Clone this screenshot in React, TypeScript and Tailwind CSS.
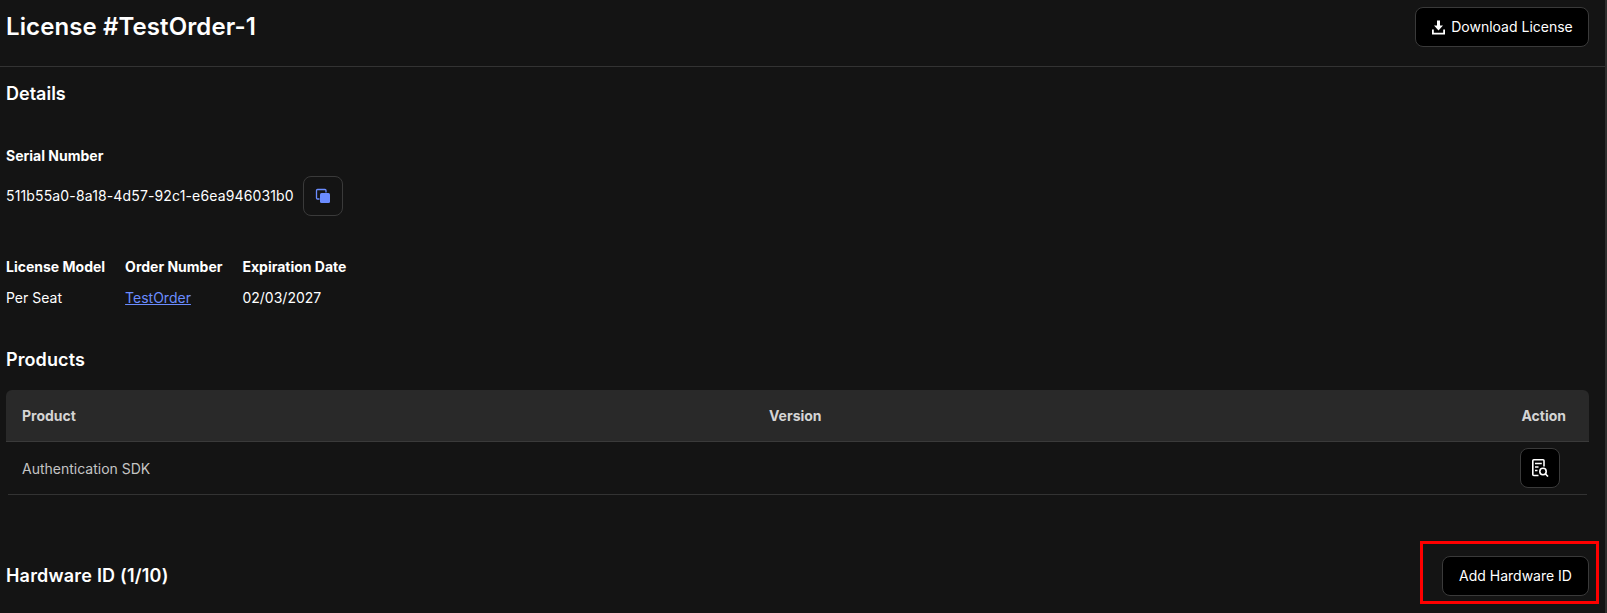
function DownloadIcon() {
  return (
    <svg width="15" height="15" viewBox="0 0 15 15" fill="white">
      <path d="M6 0.5H9V5.5H12L7.5 10.5L3 5.5H6Z" />
      <path d="M1 9.5V14.5H14V9.5H12.2V12.7H2.8V9.5Z" />
    </svg>
  );
}

function CopyIcon() {
  return (
    <svg width="16" height="16" viewBox="0 0 16 16" fill="none">
      <path d="M4.5 11H2.5C1.9 11 1.5 10.6 1.5 10V2.5C1.5 1.9 1.9 1.5 2.5 1.5H10C10.6 1.5 11 1.9 11 2.5V4.5" stroke="#6b8cff" strokeWidth="1.3" />
      <rect x="5" y="5" width="10" height="10" rx="1.5" fill="#6b8cff" />
    </svg>
  );
}

function ReportIcon() {
  return (
    <svg width="18" height="18" viewBox="0 0 18 18" fill="none" stroke="white" strokeWidth="1.6">
      <path d="M7.5 16.5H2.8C2.2 16.5 1.8 16.1 1.8 15.5V1.8C1.8 1.2 2.2 0.8 2.8 0.8H12C12.6 0.8 13 1.2 13 1.8V7.5" />
      <path d="M4 4.5H10.8M4 8H7.5M4 11.5H6.5" />
      <circle cx="12" cy="12.5" r="3.2" />
      <path d="M14.3 14.8L17 17.5" />
    </svg>
  );
}

const Label = ({ children }: { children: string }) => (
  <div className="text-sm font-bold leading-5 text-white">{children}</div>
);

export default function App() {
  return (
    <div className="relative h-[613px] overflow-hidden border-r-2 border-[#2e2e2e] bg-[#141414] font-['Inter',sans-serif] text-white">
      {/* header */}
      <div className="flex h-[67px] items-start justify-between border-b border-[#333333] pr-4 pl-1.5 pt-[7px]">
        <h1 className="mt-1 text-2xl leading-8 font-semibold tracking-[0.1px]">License #TestOrder-1</h1>
        <button className="flex h-10 w-[174px] items-center justify-center gap-[5px] rounded-lg border border-[#3a3a3a] bg-black text-sm">
          <DownloadIcon />
          Download License
        </button>
      </div>

      <div className="pr-4 pl-1.5">
        <h2 className="mt-[13px] text-lg leading-7 font-semibold">Details</h2>

        <div className="mt-[38px]">
          <Label>Serial Number</Label>
          <div className="mt-[10px] flex items-center gap-[9px] text-sm">
            <span className="tracking-[0.14px]">511b55a0-8a18-4d57-92c1-e6ea946031b0</span>
            <button className="flex h-10 w-10 items-center justify-center rounded-lg border border-[#3a3a3a]">
              <CopyIcon />
            </button>
          </div>
        </div>

        <div className="mt-[41px] flex gap-5 text-sm">
          <div>
            <Label>License Model</Label>
            <div className="mt-[11px] leading-5">Per Seat</div>
          </div>
          <div>
            <Label>Order Number</Label>
            <a className="mt-[11px] block leading-5 text-[#6b8cff] underline">TestOrder</a>
          </div>
          <div>
            <Label>Expiration Date</Label>
            <div className="mt-[11px] leading-5">02/03/2027</div>
          </div>
        </div>

        <h2 className="mt-[38px] text-lg leading-7 font-semibold tracking-[0.1px]">Products</h2>

        {/* products table */}
        <div className="mt-4">
          <div className="grid h-[52px] grid-cols-[747px_1fr_auto] items-center rounded-t-md border-b border-[#3a3a3a] bg-[#292929] pr-[23px] pl-4 text-sm font-bold text-[#d4d4d4]">
            <span>Product</span>
            <span>Version</span>
            <span>Action</span>
          </div>
          <div className="mx-0.5 flex h-[53px] items-center justify-between border-b border-[#333333] pr-[27px] pl-3.5 text-sm text-[#c4c4c4]">
            <span className="mt-0.5">Authentication SDK</span>
            <button className="flex h-10 w-10 items-center justify-center rounded-lg border border-[#3a3a3a] bg-black">
              <ReportIcon />
            </button>
          </div>
        </div>

        <div className="mt-[61px] flex items-center justify-between">
          <h2 className="text-lg leading-7 font-semibold tracking-[0.2px]">Hardware ID (1/10)</h2>
          <button className="h-10 w-[147px] rounded-lg border border-[#3a3a3a] bg-black text-sm">Add Hardware ID</button>
        </div>
      </div>

      {/* red annotation box */}
      <div className="absolute top-[541px] left-[1420px] h-[63px] w-[179px] border-[3px] border-[#ff0000]" />
    </div>
  );
}
